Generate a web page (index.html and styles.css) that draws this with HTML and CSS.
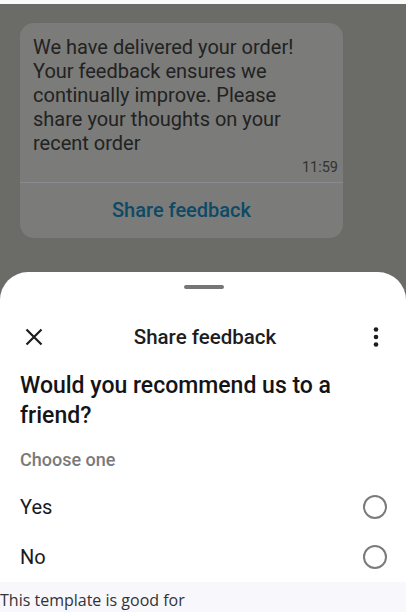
FILE: index.html
```html
<!DOCTYPE html>
<html>
<head>
<meta charset="utf-8">
<link rel="stylesheet" href="styles.css">
</head>
<body>
<div class="topline"></div>
<div class="screen">
  <div class="chat">
    <div class="bubble">
      <p class="msg">We have delivered your order! Your feedback ensures we continually improve. Please share your thoughts on your recent order</p>
      <div class="time">11:59</div>
      <div class="action">Share feedback</div>
    </div>
  </div>
  <div class="sheet">
    <div class="handle"></div>
    <div class="header">
      <svg class="icon" width="24" height="24" viewBox="0 0 24 24"><path d="M4.5 4.5 L19.5 19.5 M19.5 4.5 L4.5 19.5" stroke="#1d1d1f" stroke-width="2.2" fill="none"/></svg>
      <div class="title">Share feedback</div>
      <svg class="icon" width="24" height="24" viewBox="0 0 24 24"><circle cx="12" cy="4.5" r="2.3" fill="#1d1d1f"/><circle cx="12" cy="12" r="2.3" fill="#1d1d1f"/><circle cx="12" cy="19.5" r="2.3" fill="#1d1d1f"/></svg>
    </div>
    <h2 class="question">Would you recommend us to a friend?</h2>
    <div class="hint">Choose one</div>
    <div class="option"><span>Yes</span><span class="radio"></span></div>
    <div class="option"><span>No</span><span class="radio"></span></div>
  </div>
</div>
<div class="footer">This template is good for</div>
</body>
</html>
```
FILE: styles.css
```css
html, body {
  margin: 0;
  padding: 0;
  background: #f8f7fc;
}
body {
  width: 406px;
  font-family: Roboto, "Noto Sans", sans-serif;
}
.topline {
  height: 4px;
  background: #fafafa;
}
.screen {
  background: #6b6b67;
}
.chat {
  padding: 19px 63px 34px 20px;
}
.bubble {
  background: #7b7b79;
  border-radius: 14px;
}
.msg {
  margin: 0;
  padding: 12px 13px 0 13px;
  font-size: 20px;
  line-height: 24px;
  color: #222;
}
.time {
  text-align: right;
  font-size: 14.5px;
  line-height: 16px;
  color: #333;
  padding: 5px 5px 6px 0;
}
.action {
  border-top: 1px solid #8a8b90;
  height: 55px;
  line-height: 55px;
  text-align: center;
  font-size: 20px;
  font-weight: 500;
  color: #0d4a66;
}
.sheet {
  background: #ffffff;
  border-radius: 28px 28px 0 0;
  padding: 13px 19px 0 20px;
}
.handle {
  width: 40px;
  height: 4px;
  border-radius: 2px;
  background: #767676;
  margin: 0 auto;
}
.header {
  display: flex;
  align-items: center;
  justify-content: space-between;
  margin: 36px -1px 0 2px;
  height: 24px;
}
.header .icon {
  display: block;
}
.title {
  font-size: 20.5px;
  font-weight: 500;
  color: #1d1d1f;
}
.question {
  margin: 22px 40px 0 0;
  font-size: 23px;
  line-height: 30px;
  font-weight: 500;
  color: #141416;
}
.hint {
  margin-top: 17px;
  font-size: 18px;
  line-height: 24px;
  font-weight: 500;
  color: #7a7a7a;
}
.option {
  display: flex;
  align-items: center;
  justify-content: space-between;
  height: 50px;
  font-size: 20px;
  color: #1a1a1c;
}
.hint + .option {
  margin-top: 10px;
}
.radio {
  width: 20px;
  height: 20px;
  border: 2px solid #7b7b7b;
  border-radius: 50%;
}
.footer {
  padding-top: 7px;
  font-family: "Open Sans", "Noto Sans", sans-serif;
  font-size: 16px;
  line-height: 22px;
  color: #333;
}
```
